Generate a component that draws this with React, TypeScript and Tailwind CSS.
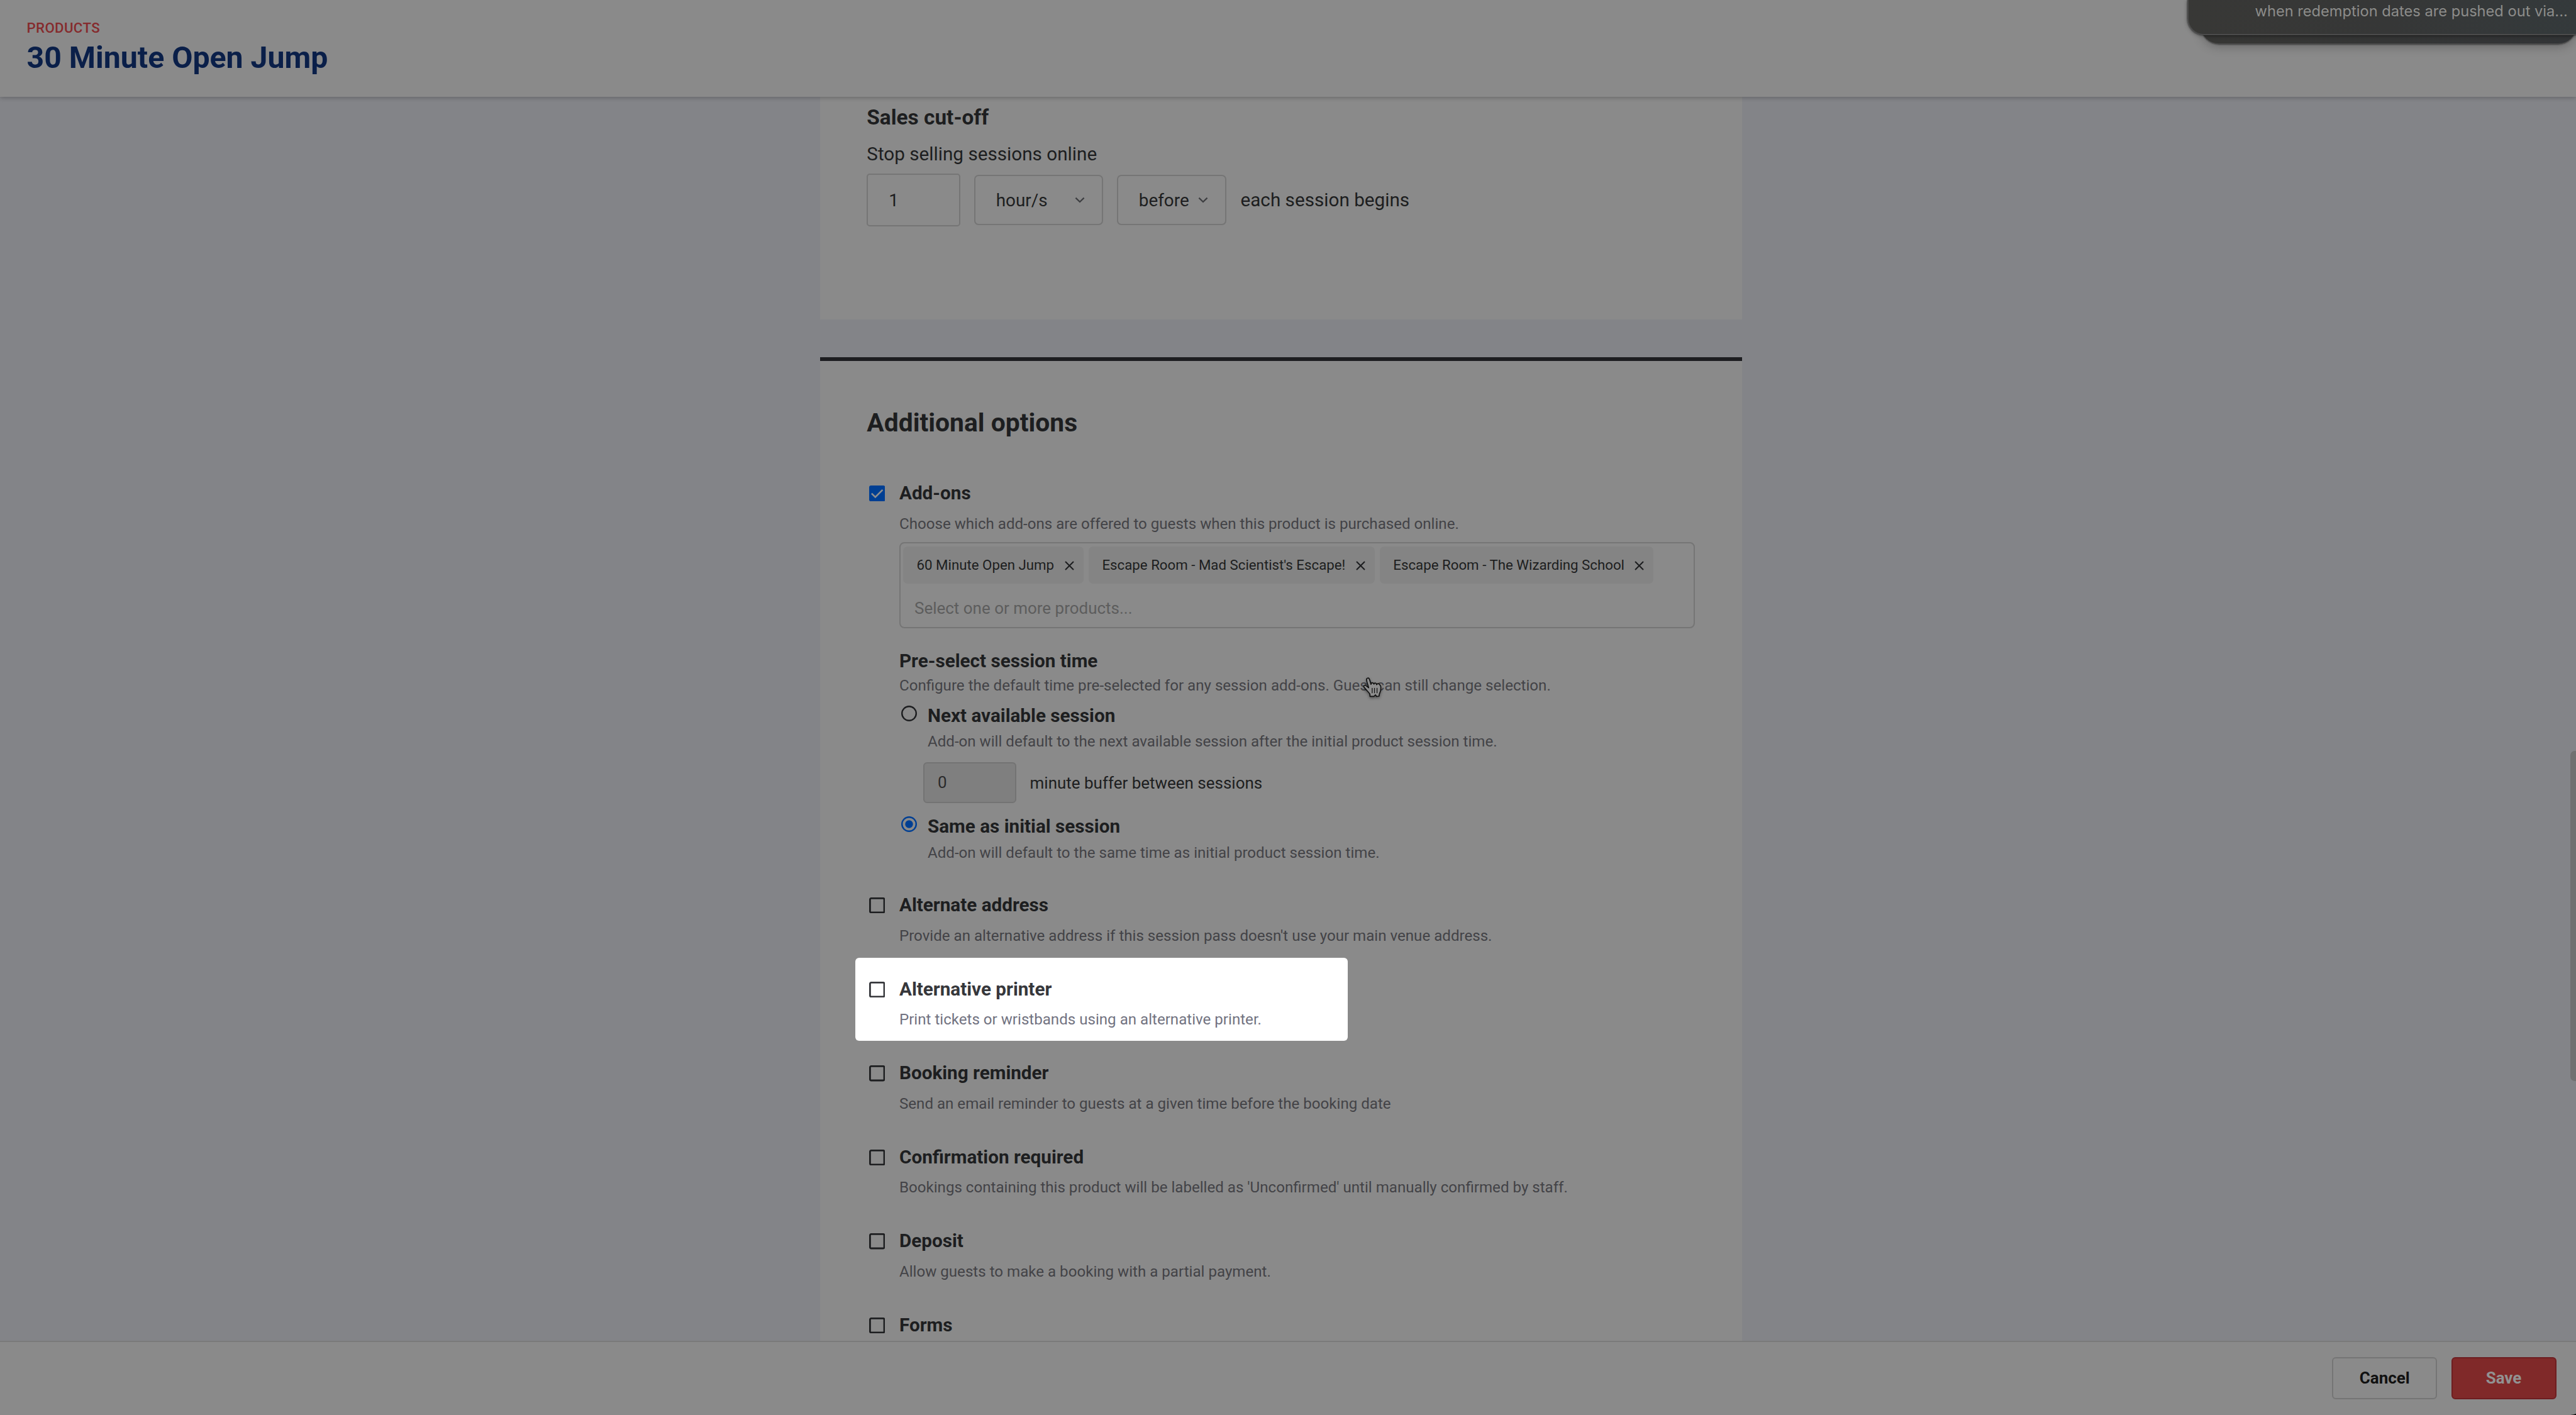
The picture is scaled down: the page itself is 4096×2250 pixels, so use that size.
import type { ReactNode } from "react";

function Checkbox({ checked = false, color = "#1d1e20" }: { checked?: boolean; color?: string }) {
  return (
    <svg viewBox="0 0 25.4 25.4" className="mt-[6px] ml-[3.7px] mr-[22.6px] size-[25.4px] shrink-0">
      {checked ? (
        <>
          <rect width="25.4" height="25.4" rx="3" fill="#003f93" />
          <path d="M3.9 12.6 L9.8 18.4 L21.4 6.8" fill="none" stroke="#8f8f8f" strokeWidth="2.6" />
        </>
      ) : (
        <rect x="1.4" y="1.4" width="22.6" height="22.6" rx="1.8" fill="none" stroke={color} strokeWidth="2.8" />
      )}
    </svg>
  );
}

function Radio({ checked = false }: { checked?: boolean }) {
  const color = checked ? "#003f93" : "#1d1e20";
  return (
    <svg viewBox="0 0 25 25" className="mt-[2px] ml-[3px] mr-[17px] size-[25px] shrink-0">
      <circle cx="12.5" cy="12.5" r="11.3" fill="none" stroke={color} strokeWidth="2.4" />
      {checked && <circle cx="12.5" cy="12.5" r="6.2" fill={color} />}
    </svg>
  );
}

function Chevron() {
  return (
    <svg viewBox="0 0 16 10" className="h-[10px] w-[16px] shrink-0" fill="none" stroke="#3d3e41" strokeWidth="2.2">
      <path d="M1.4 1.6 L8 8 L14.6 1.6" />
    </svg>
  );
}

function Title({ children, className = "" }: { children: ReactNode; className?: string }) {
  return <div className={`text-[29.68px] leading-[36px] font-bold whitespace-nowrap ${className}`}>{children}</div>;
}

function Hint({ children, className = "" }: { children: ReactNode; className?: string }) {
  return <div className={`text-[24.12px] leading-[32px] whitespace-nowrap ${className}`}>{children}</div>;
}

function Option({ title, hint, highlighted = false }: { title: string; hint: string; highlighted?: boolean }) {
  return (
    <div
      className={
        highlighted
          ? "-mt-[31.4px] mb-[32.97px] -ml-[18.5px] flex h-[132px] w-[783px] rounded-[6px] bg-white pt-[31.4px] pl-[18.5px] text-[#36373b]"
          : "flex h-[133.57px]"
      }
    >
      <Checkbox color={highlighted ? "#36373b" : "#1d1e20"} />
      <div>
        <Title>{title}</Title>
        <Hint className={highlighted ? "mt-[14.5px] text-[#727381]" : "mt-[14.5px] text-[#434347]"}>{hint}</Hint>
      </div>
    </div>
  );
}

function Tag({ label, width }: { label: string; width: string }) {
  return (
    <div
      className={`flex h-[59.4px] items-center justify-between rounded-[7px] bg-[#848484] pr-[15.2px] pl-[21.6px] text-[22.26px] whitespace-nowrap ${width}`}
    >
      <span>{label}</span>
      <svg viewBox="0 0 15 15" className="mt-[1px] size-[15px]" stroke="#1d1e20" strokeWidth="2.1">
        <path d="M1 1 L14 14 M14 1 L1 14" />
      </svg>
    </div>
  );
}

function SelectBox({ label, className }: { label: string; className: string }) {
  return (
    <div
      className={`flex h-[80px] items-center justify-between rounded-[7px] border-2 border-[#757575] pr-[27px] pl-[33px] text-[27.83px] ${className}`}
    >
      <span className="pt-[1px]">{label}</span>
      <Chevron />
    </div>
  );
}

const options = [
  { title: "Alternate address", hint: "Provide an alternative address if this session pass doesn't use your main venue address." },
  { title: "Alternative printer", hint: "Print tickets or wristbands using an alternative printer.", highlighted: true },
  { title: "Booking reminder", hint: "Send an email reminder to guests at a given time before the booking date" },
  { title: "Confirmation required", hint: "Bookings containing this product will be labelled as 'Unconfirmed' until manually confirmed by staff." },
  { title: "Deposit", hint: "Allow guests to make a booking with a partial payment." },
  { title: "Forms", hint: "" },
];

function Notification() {
  return (
    <div className="absolute top-0 right-0 z-20 h-[100px] w-[640px] overflow-hidden">
      <div className="absolute top-0 left-[43.6px] h-[70.5px] w-[596px] rounded-b-[28px] border-b-2 border-[#4b4b4b] bg-linear-to-r from-[#363634] to-[#323436] shadow-[0_3px_16px_rgba(0,0,0,0.25),0_0_2px_rgba(0,0,0,0.6)]" />
      <div className="absolute top-0 left-[21.6px] h-[55.7px] w-[640px] rounded-b-[26px] border-b-2 border-l-2 border-[#4b4b4b] bg-linear-to-r from-[#383836] via-[#363737] to-[#343a3c] shadow-[0_1px_6px_rgba(0,0,0,0.35),0_0_2px_rgba(0,0,0,0.8)]">
        <div className="pt-[3px] pl-[106px] font-[Inter] text-[23.65px] leading-[30px] whitespace-nowrap text-[#8c8c8a]">
          when redemption dates are pushed out via...
        </div>
      </div>
    </div>
  );
}

function HandCursor() {
  return (
    <svg
      viewBox="0 0 97 105"
      className="absolute top-[1076.6px] left-[2166.7px] z-10 h-[32.5px] w-[30px] overflow-visible drop-shadow-[0_2px_2px_rgba(0,0,0,0.4)]"
    >
      <path
        d="M37 98 L36 86 C30 76 12 60 6 50 C2 43 9 37 17 43 L30 54 C27 40 20 24 19 13 C18 3 30 0 34 10 L42 36 C42 25 54 25 57 35 C58 27 69 28 71 38 C74 30 85 32 88 40 C95 44 93 58 91 70 C89 78 84 84 84 92 L83 97 L70 98 L65 90 L57 98 Z"
        fill="#8e8e8e"
        stroke="#111111"
        strokeWidth="5.5"
        strokeLinejoin="round"
      />
      <path d="M48 56 V80 M60 56 V80 M73 56 V80" stroke="#111111" strokeWidth="4" strokeLinecap="round" />
    </svg>
  );
}

export default function App() {
  return (
    <div className="relative flex h-[2250px] w-[4096px] flex-col overflow-hidden bg-[#838488] font-[Roboto,sans-serif] text-[#1d1e20]">
      <header className="relative z-10 h-[154px] shrink-0 bg-[#8a8a8a] pt-[32px] pl-[42.5px] shadow-[0_1px_7px_rgba(0,0,0,0.28)]">
        <div className="text-[22.26px] leading-[24px] font-medium tracking-[0.35px] text-[#852a2d]">PRODUCTS</div>
        <h1 className="mt-[8px] text-[48.23px] leading-[56px] font-bold text-[#0a1f49]">30 Minute Open Jump</h1>
      </header>

      <main className="flex h-[1978px] shrink-0 flex-col items-center gap-[60px] overflow-hidden pr-[22px]">
        <section className="h-[354px] w-[1466px] shrink-0 bg-[#8a8a8a] px-[74.3px] pt-[12.6px]">
          <h3 className="text-[33.39px] leading-[40px] font-bold">Sales cut-off</h3>
          <div className="mt-[20px] text-[29.68px] leading-[36px]">Stop selling sessions online</div>
          <div className="mt-[13.6px] flex h-[84px] items-center gap-[22px]">
            <div className="flex h-[84px] w-[148.5px] items-center rounded-[5px] border-2 border-[#757575] pt-[1px] pl-[33px] text-[27.83px]">
              1
            </div>
            <SelectBox label="hour/s" className="w-[205px]" />
            <SelectBox label="before" className="w-[174px]" />
            <div className="-mt-[1px] ml-[0.7px] text-[29.68px] leading-[36px]">each session begins</div>
          </div>
        </section>

        <section className="h-[1700px] w-[1466px] shrink-0 border-t-[6px] border-[#1d1d20] bg-[#8a8a8a] px-[74.3px] pt-[74px]">
          <h2 className="text-[40.81px] leading-[48px] font-bold">Additional options</h2>

          <div className="mt-[70px] flex">
            <Checkbox checked />
            <div>
              <Title>Add-ons</Title>
              <Hint className="mt-[14.5px] text-[#434347]">
                Choose which add-ons are offered to guests when this product is purchased online.
              </Hint>
              <div className="mt-[13.5px] h-[137px] w-[1265px] rounded-[8px] border-2 border-[#757575] pt-[5px] pl-[4px]">
                <div className="flex gap-[7.4px]">
                  <Tag label="60 Minute Open Jump" width="w-[287.5px]" />
                  <Tag label="Escape Room - Mad Scientist's Escape!" width="w-[455.5px]" />
                  <Tag label="Escape Room - The Wizarding School" width="w-[435.7px]" />
                </div>
                <div className="mt-[22.5px] pl-[18px] text-[25.97px] leading-[32px] text-[#5d5d5d]">
                  Select one or more products...
                </div>
              </div>

              <Title className="mt-[34px]">Pre-select session time</Title>
              <Hint className="mt-[5px] text-[#434347]">
                Configure the default time pre-selected for any session add-ons. Guest can still change selection.
              </Hint>

              <div className="mt-[14px] flex">
                <Radio />
                <div>
                  <Title>Next available session</Title>
                  <Hint className="mt-[7px] text-[#434347]">
                    Add-on will default to the next available session after the initial product session time.
                  </Hint>
                  <div className="mt-[17px] -ml-[7px] flex items-center gap-[21.6px]">
                    <div className="flex h-[65px] w-[148px] items-center rounded-[6px] border-2 border-[#737373] bg-[#7f7f7f] pl-[21px] text-[25.97px] text-[#2b2b2c]">
                      0
                    </div>
                    <div className="text-[25.97px] leading-[32px]">minute buffer between sessions</div>
                  </div>
                </div>
              </div>

              <div className="mt-[19px] flex">
                <Radio checked />
                <div>
                  <Title>Same as initial session</Title>
                  <Hint className="mt-[7.5px] text-[#434347]">
                    Add-on will default to the same time as initial product session time.
                  </Hint>
                </div>
              </div>
            </div>
          </div>

          <div className="mt-[49.5px]">
            {options.map((option) => (
              <Option key={option.title} {...option} />
            ))}
          </div>
        </section>
      </main>

      <footer className="flex h-[118px] shrink-0 justify-end gap-[22.3px] border-t-2 border-[#7a7a7a] bg-[#8a8a8a] pt-[24.4px] pr-[31.5px] text-[25.97px] font-bold">
        <div className="flex h-[67px] w-[167px] items-center justify-center rounded-[6px] border-2 border-[#757575] pb-[1px] text-[#111111]">
          Cancel
        </div>
        <div className="flex h-[67px] w-[167px] items-center justify-center rounded-[6px] border-2 border-[#6e1d20] bg-[#802929] pb-[1px] text-[#929292]">
          Save
        </div>
      </footer>

      <Notification />
      <HandCursor />
      <div className="absolute top-[1193.7px] right-0 h-[525px] w-[9.5px] rounded-l-[7px] bg-[#717171]" />
      <svg viewBox="0 0 9 2" className="absolute right-0 bottom-0 h-[2px] w-[9px]">
        <path d="M0 2 Q6 1.6 9 0 V2 Z" fill="#000000" />
      </svg>
    </div>
  );
}
